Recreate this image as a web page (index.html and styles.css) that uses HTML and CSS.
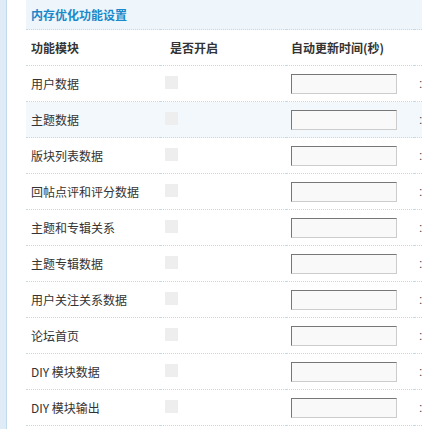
FILE: index.html
```html
<!DOCTYPE html>
<html lang="zh-CN">
<head>
    <meta charset="UTF-8">
    <title>内存优化功能设置</title>
    <link rel="stylesheet" href="styles.css">
</head>
<body>
    <div class="frame">
        <div class="side"></div>
        <div class="main">
            <table class="tb">
                <colgroup>
                    <col class="c1">
                    <col class="c2">
                    <col class="c3">
                    <col class="c4">
                </colgroup>
                <tr class="title-row">
                    <th colspan="4">内存优化功能设置</th>
                </tr>
                <tr class="head-row">
                    <td>功能模块</td>
                    <td class="h-chk">是否开启</td>
                    <td>自动更新时间(秒)</td>
                    <td></td>
                </tr>
                <tr><td>用户数据</td><td><span class="chk"></span></td><td><input class="txt" type="text"></td><td class="tip">:</td></tr>
                <tr class="hover"><td>主题数据</td><td><span class="chk"></span></td><td><input class="txt" type="text"></td><td class="tip">:</td></tr>
                <tr><td>版块列表数据</td><td><span class="chk"></span></td><td><input class="txt" type="text"></td><td class="tip">:</td></tr>
                <tr><td>回帖点评和评分数据</td><td><span class="chk"></span></td><td><input class="txt" type="text"></td><td class="tip">:</td></tr>
                <tr><td>主题和专辑关系</td><td><span class="chk"></span></td><td><input class="txt" type="text"></td><td class="tip">:</td></tr>
                <tr><td>主题专辑数据</td><td><span class="chk"></span></td><td><input class="txt" type="text"></td><td class="tip">:</td></tr>
                <tr><td>用户关注关系数据</td><td><span class="chk"></span></td><td><input class="txt" type="text"></td><td class="tip">:</td></tr>
                <tr><td>论坛首页</td><td><span class="chk"></span></td><td><input class="txt" type="text"></td><td class="tip">:</td></tr>
                <tr><td>DIY 模块数据</td><td><span class="chk"></span></td><td><input class="txt" type="text"></td><td class="tip">:</td></tr>
                <tr><td>DIY 模块输出</td><td><span class="chk"></span></td><td><input class="txt" type="text"></td><td class="tip">:</td></tr>
            </table>
        </div>
    </div>
</body>
</html>
```

FILE: styles.css
```css
html, body {
    margin: 0;
    padding: 0;
    background: #ffffff;
    overflow: hidden;
}
body {
    font-family: "Noto Sans CJK SC", "Liberation Sans", sans-serif;
    font-size: 12px;
    color: #333333;
}
.frame {
    display: flex;
    height: 429px;
}
.side {
    width: 6px;
    flex: none;
    background: #dfecf7;
    border-right: 1px solid #c3d9ec;
}
.main {
    flex: none;
    padding-left: 19px;
}
.tb {
    border-collapse: collapse;
    table-layout: fixed;
    width: 396px;
}
.c1 { width: 134px; }
.c2 { width: 126px; }
.c3 { width: 128px; }
.c4 { width: 8px; }
.tb td, .tb th {
    padding: 0 5px;
    text-align: left;
    white-space: nowrap;
    border-bottom: 1px dotted #c4d9e4;
    height: 35px;
    vertical-align: middle;
}
.title-row th {
    height: 29px;
    background: #eef5fb;
    color: #1a88c9;
    font-weight: bold;
    font-size: 12px;
}
.head-row td {
    font-weight: bold;
    color: #333333;
}
.tb td.h-chk {
    padding-left: 10px;
}
.tb td.tip {
    padding: 0 0 0 5px;
    font-family: "Liberation Sans", sans-serif;
    color: #444444;
}
.tb tr.hover td {
    background: #f2f8fc;
}
.chk {
    display: block;
    width: 13px;
    height: 13px;
    background: #eeeeee;
    margin-top: -3px;
}
.txt {
    display: block;
    box-sizing: border-box;
    width: 106px;
    height: 20px;
    margin: 0;
    padding: 0;
    border: 1px solid #cccccc;
    border-top-color: #777777;
    border-left-color: #777777;
    background: #f9f9f9;
}
```
